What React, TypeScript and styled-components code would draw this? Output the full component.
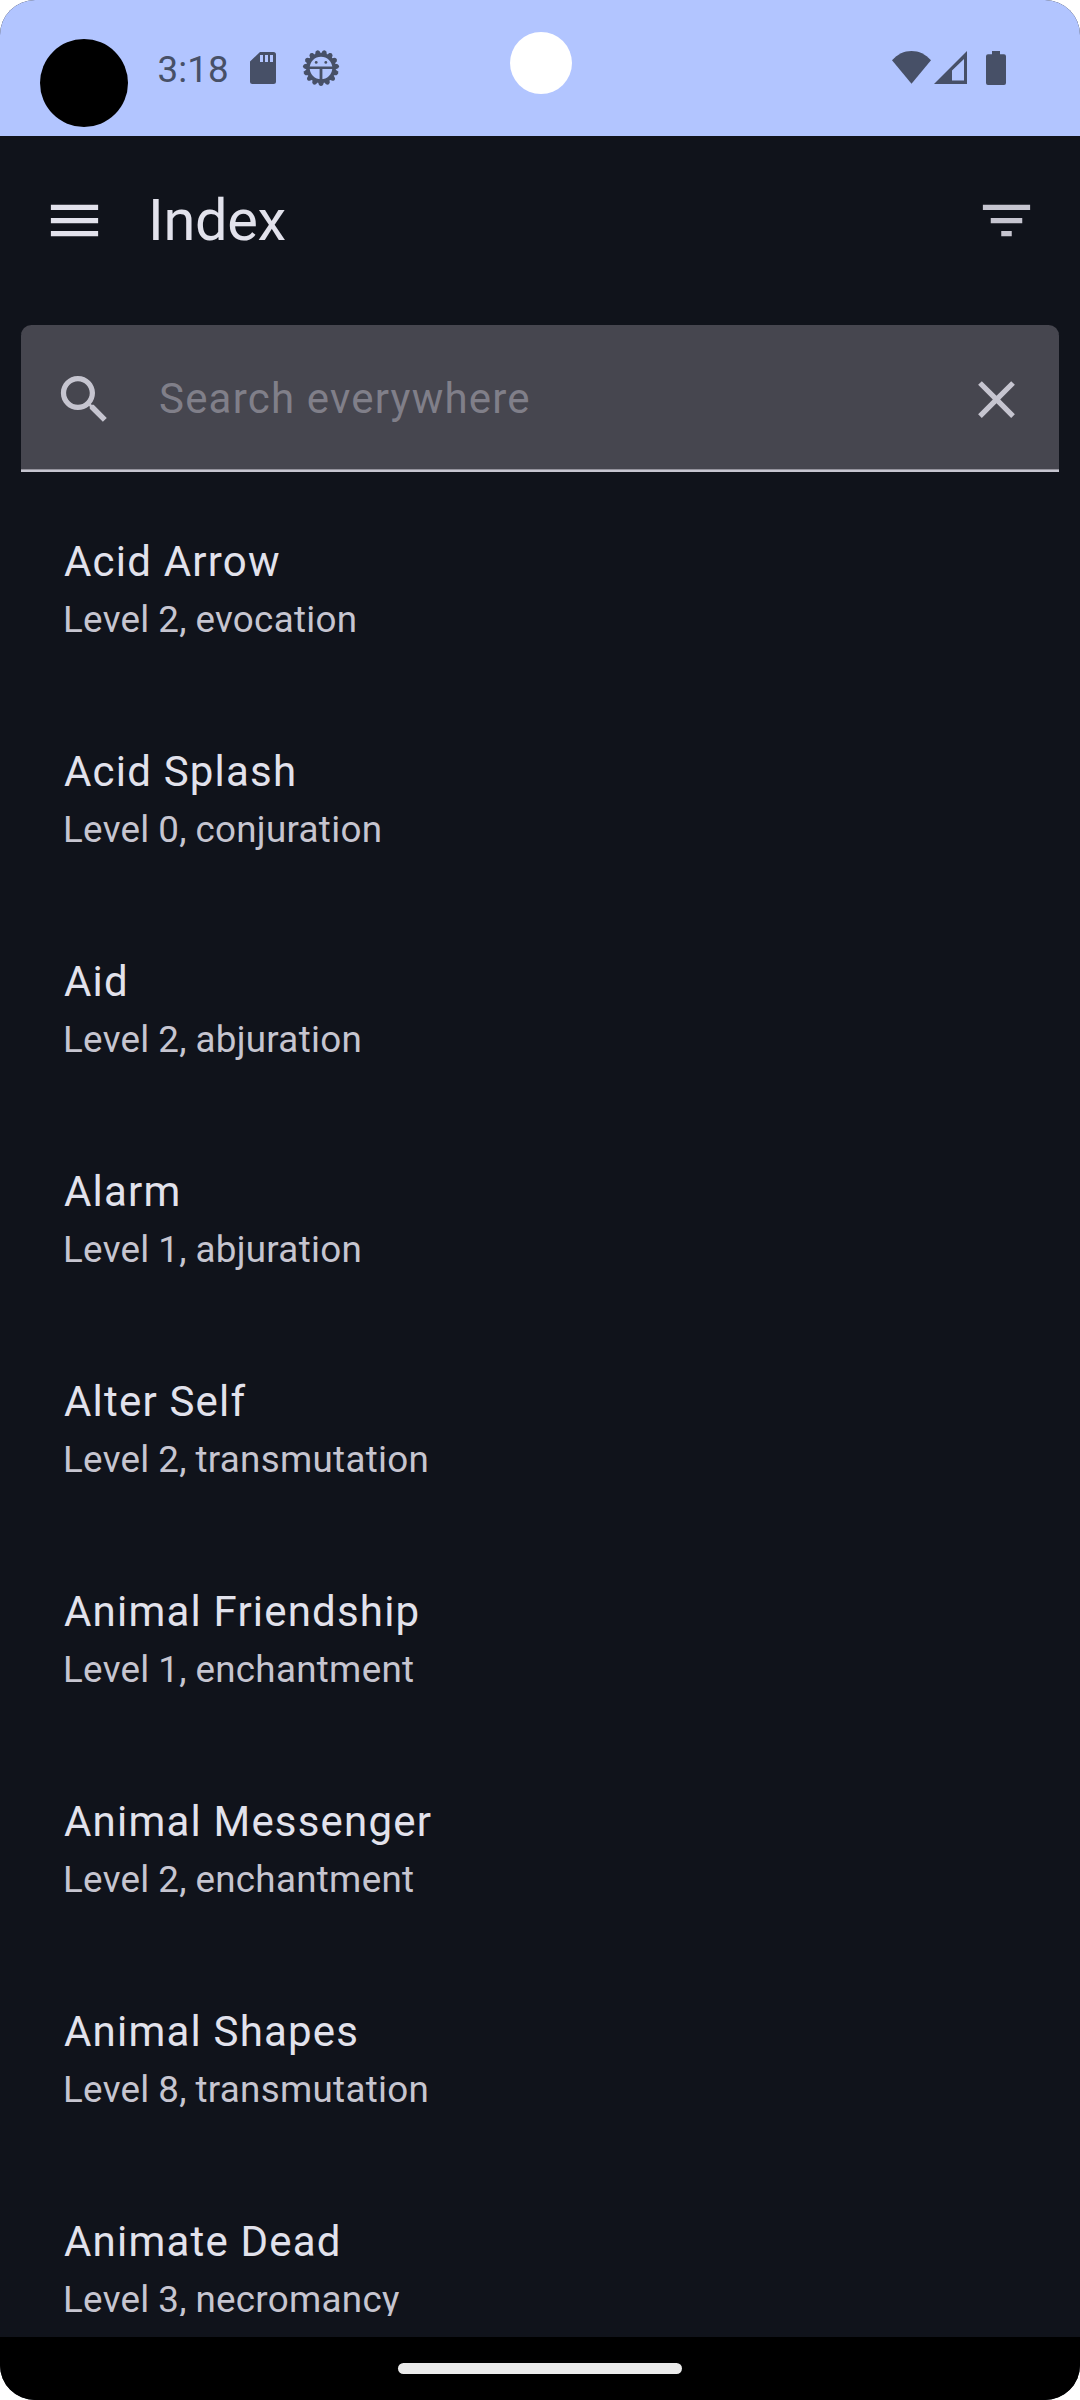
import React from "react";
import styled, { createGlobalStyle } from "styled-components";

const GlobalStyle = createGlobalStyle`
  * { box-sizing: border-box; }
  body { margin: 0; background: #fff; font-family: Roboto, sans-serif; }
`;

const Screen = styled.div`
  position: relative;
  display: flex;
  flex-direction: column;
  width: 1080px;
  height: 2400px;
  overflow: hidden;
  border-radius: 35px;
  background: #10131b;
`;

const StatusBar = styled.header`
  display: flex;
  align-items: flex-start;
  justify-content: space-between;
  flex: none;
  height: 136px;
  padding: 39px 74px 0 40px;
  background: #b2c5ff;
  color: #475067;
`;

const StatusGroup = styled.div`
  display: flex;
  align-items: flex-start;
`;

const Avatar = styled.div`
  width: 88px;
  height: 88px;
  border-radius: 50%;
  background: #000;
`;

const Camera = styled.div`
  position: absolute;
  top: 31.6px;
  left: 509.5px;
  width: 62px;
  height: 62px;
  border-radius: 50%;
  background: #fff;
`;

const Clock = styled.time`
  margin: 9px 0 0 29.5px;
  width: 73px;
  font-size: 36.75px;
  line-height: 43px;
  letter-spacing: 0.1px;
`;

const Glyph = styled.svg<{ $ml?: number; $mt?: number }>`
  display: block;
  flex: none;
  fill: currentColor;
  margin-left: ${(p) => p.$ml ?? 0}px;
  margin-top: ${(p) => p.$mt ?? 0}px;
`;

const TopBar = styled.nav`
  display: flex;
  align-items: center;
  flex: none;
  height: 168px;
  padding: 0 42px 0 43px;
`;

const Title = styled.h1`
  flex: 1;
  margin: 0 0 0 42px;
  color: #e2e2ec;
  font-size: 57.75px;
  font-weight: 400;
  line-height: 74px;
  letter-spacing: -0.3px;
`;

const IconButton = styled.button<{ $bright?: boolean }>`
  display: block;
  width: 63px;
  height: 63px;
  padding: 0;
  border: 0;
  background: none;
  color: ${(p) => (p.$bright ? "#e2e2ec" : "#c6c5d0")};
`;

const SearchField = styled.label`
  display: flex;
  align-items: center;
  flex: none;
  height: 147px;
  margin: 21px 21px 0;
  padding: 3px 31px 0 32px;
  border-bottom: 2px solid #c6c5d0;
  border-radius: 10.5px 10.5px 0 0;
  background: #46464f;
  box-shadow: inset 0 -1px 0 #93929c;
  color: #c6c5d0;
`;

const SearchInput = styled.input`
  flex: 1;
  min-width: 0;
  height: 63px;
  margin: 0 0 2px 43px;
  padding: 0;
  border: 0;
  outline: 0;
  background: none;
  color: #e2e2ec;
  font: 400 42px/63px Roboto, sans-serif;
  letter-spacing: 1.2px;
  &::placeholder {
    color: #807f89;
    opacity: 1;
  }
`;

const List = styled.ul`
  flex: none;
  height: 1823px;
  margin: 21px 0;
  padding: 0;
  overflow: hidden;
  list-style: none;
`;

const Item = styled.li`
  height: 210px;
  padding: 37px 63px 0;
`;

const Name = styled.div`
  padding-left: 1px;
  color: #e2e2ec;
  font-size: 42px;
  line-height: 63px;
  letter-spacing: 1.2px;
`;

const Detail = styled.div`
  color: #c6c5d0;
  font-size: 36.75px;
  line-height: 54px;
  letter-spacing: 0.3px;
  word-spacing: -0.7px;
`;

const NavBar = styled.footer`
  display: flex;
  align-items: center;
  justify-content: center;
  flex: none;
  height: 63px;
  background: #000;
`;

const Handle = styled.div`
  width: 284px;
  height: 11px;
  border-radius: 6px;
  background: #ebebeb;
`;

const MenuIcon = () => (
  <Glyph width="63" height="63" viewBox="0 0 24 24">
    <path d="M3 18h18v-2H3v2zm0-5h18v-2H3v2zm0-7v2h18V6H3z" />
  </Glyph>
);

const FilterIcon = () => (
  <Glyph width="63" height="63" viewBox="0 0 24 24">
    <path d="M10 18h4v-2h-4v2zM3 6v2h18V6H3zm3 7h12v-2H6v2z" />
  </Glyph>
);

const SearchIcon = () => (
  <Glyph width="63" height="63" viewBox="0 0 24 24">
    <path d="M15.5 14h-.79l-.28-.27C15.41 12.59 16 11.11 16 9.5 16 5.91 13.09 3 9.5 3S3 5.91 3 9.5 5.91 16 9.5 16c1.61 0 3.09-.59 4.23-1.57l.27.28v.79l5 4.99L20.49 19l-4.99-5zm-6 0C7.01 14 5 11.99 5 9.5S7.01 5 9.5 5 14 7.01 14 9.5 11.99 14 9.5 14z" />
  </Glyph>
);

const CloseIcon = () => (
  <Glyph width="63" height="63" viewBox="0 0 24 24">
    <path d="M19 6.41L17.59 5 12 10.59 6.41 5 5 6.41 10.59 12 5 17.59 6.41 19 12 13.41 17.59 19 19 17.59 13.41 12z" />
  </Glyph>
);

const SdCardIcon = () => (
  <Glyph width="26" height="32" viewBox="0 0 26 32" $ml={19} $mt={13}>
    <path
      fillRule="evenodd"
      d="M10 0H23.5Q26 0 26 2.5V29.5Q26 32 23.5 32H2.5Q0 32 0 29.5V9.5ZM10 3V10H13V3ZM15 3V10H18V3ZM20 3V10H23V3Z"
    />
  </Glyph>
);

const TEETH = Array.from({ length: 15 }, (_, i) => 90 + i * 24);

const DebugIcon = () => (
  <Glyph width="38" height="38" viewBox="-19 -19 38 38" $ml={26.5} $mt={10}>
    {TEETH.map((angle) => (
      <path key={angle} transform={`rotate(${angle})`} d="M13 -3.4L17 -2Q19.2 0 17 2L13 3.4Z" />
    ))}
    <circle r="13" fill="none" stroke="currentColor" strokeWidth="3.4" />
    <path d="M-13 -1.5H13V1H1.4V13H-1.4V1H-13Z" />
    <circle cx="-4.8" cy="-5.6" r="1.4" />
    <circle cx="4.8" cy="-5.6" r="1.4" />
  </Glyph>
);

const WifiIcon = () => (
  <Glyph width="39" height="33" viewBox="0 0 39 33" $mt={12}>
    <path d="M19.5 32.8L0 9.3C5.5 3.2 12 0 19.5 0S33.5 3.2 39 9.3Z" />
  </Glyph>
);

const SignalIcon = () => (
  <Glyph width="33" height="33" viewBox="0 0 33 33" $ml={3} $mt={12}>
    <path fillRule="evenodd" d="M33 0V33H0ZM30 8L18 19.5V29.5H30Z" />
  </Glyph>
);

const BatteryIcon = () => (
  <Glyph width="20" height="34" viewBox="0 0 20 34" $ml={19} $mt={12}>
    <path d="M6 0H14V3.3H18Q20 3.3 20 5.3V32Q20 34 18 34H2Q0 34 0 32V5.3Q0 3.3 2 3.3H6Z" />
  </Glyph>
);

const spells = [
  { name: "Acid Arrow", detail: "Level 2, evocation" },
  { name: "Acid Splash", detail: "Level 0, conjuration" },
  { name: "Aid", detail: "Level 2, abjuration" },
  { name: "Alarm", detail: "Level 1, abjuration" },
  { name: "Alter Self", detail: "Level 2, transmutation" },
  { name: "Animal Friendship", detail: "Level 1, enchantment" },
  { name: "Animal Messenger", detail: "Level 2, enchantment" },
  { name: "Animal Shapes", detail: "Level 8, transmutation" },
  { name: "Animate Dead", detail: "Level 3, necromancy" },
];

export default function App() {
  return (
    <>
      <GlobalStyle />
      <Screen>
        <StatusBar>
          <StatusGroup>
            <Avatar />
            <Clock>3:18</Clock>
            <SdCardIcon />
            <DebugIcon />
          </StatusGroup>
          <StatusGroup>
            <WifiIcon />
            <SignalIcon />
            <BatteryIcon />
          </StatusGroup>
          <Camera />
        </StatusBar>
        <TopBar>
          <IconButton $bright>
            <MenuIcon />
          </IconButton>
          <Title>Index</Title>
          <IconButton>
            <FilterIcon />
          </IconButton>
        </TopBar>
        <SearchField>
          <SearchIcon />
          <SearchInput placeholder="Search everywhere" />
          <CloseIcon />
        </SearchField>
        <List>
          {spells.map((spell) => (
            <Item key={spell.name}>
              <Name>{spell.name}</Name>
              <Detail>{spell.detail}</Detail>
            </Item>
          ))}
        </List>
        <NavBar>
          <Handle />
        </NavBar>
      </Screen>
    </>
  );
}
